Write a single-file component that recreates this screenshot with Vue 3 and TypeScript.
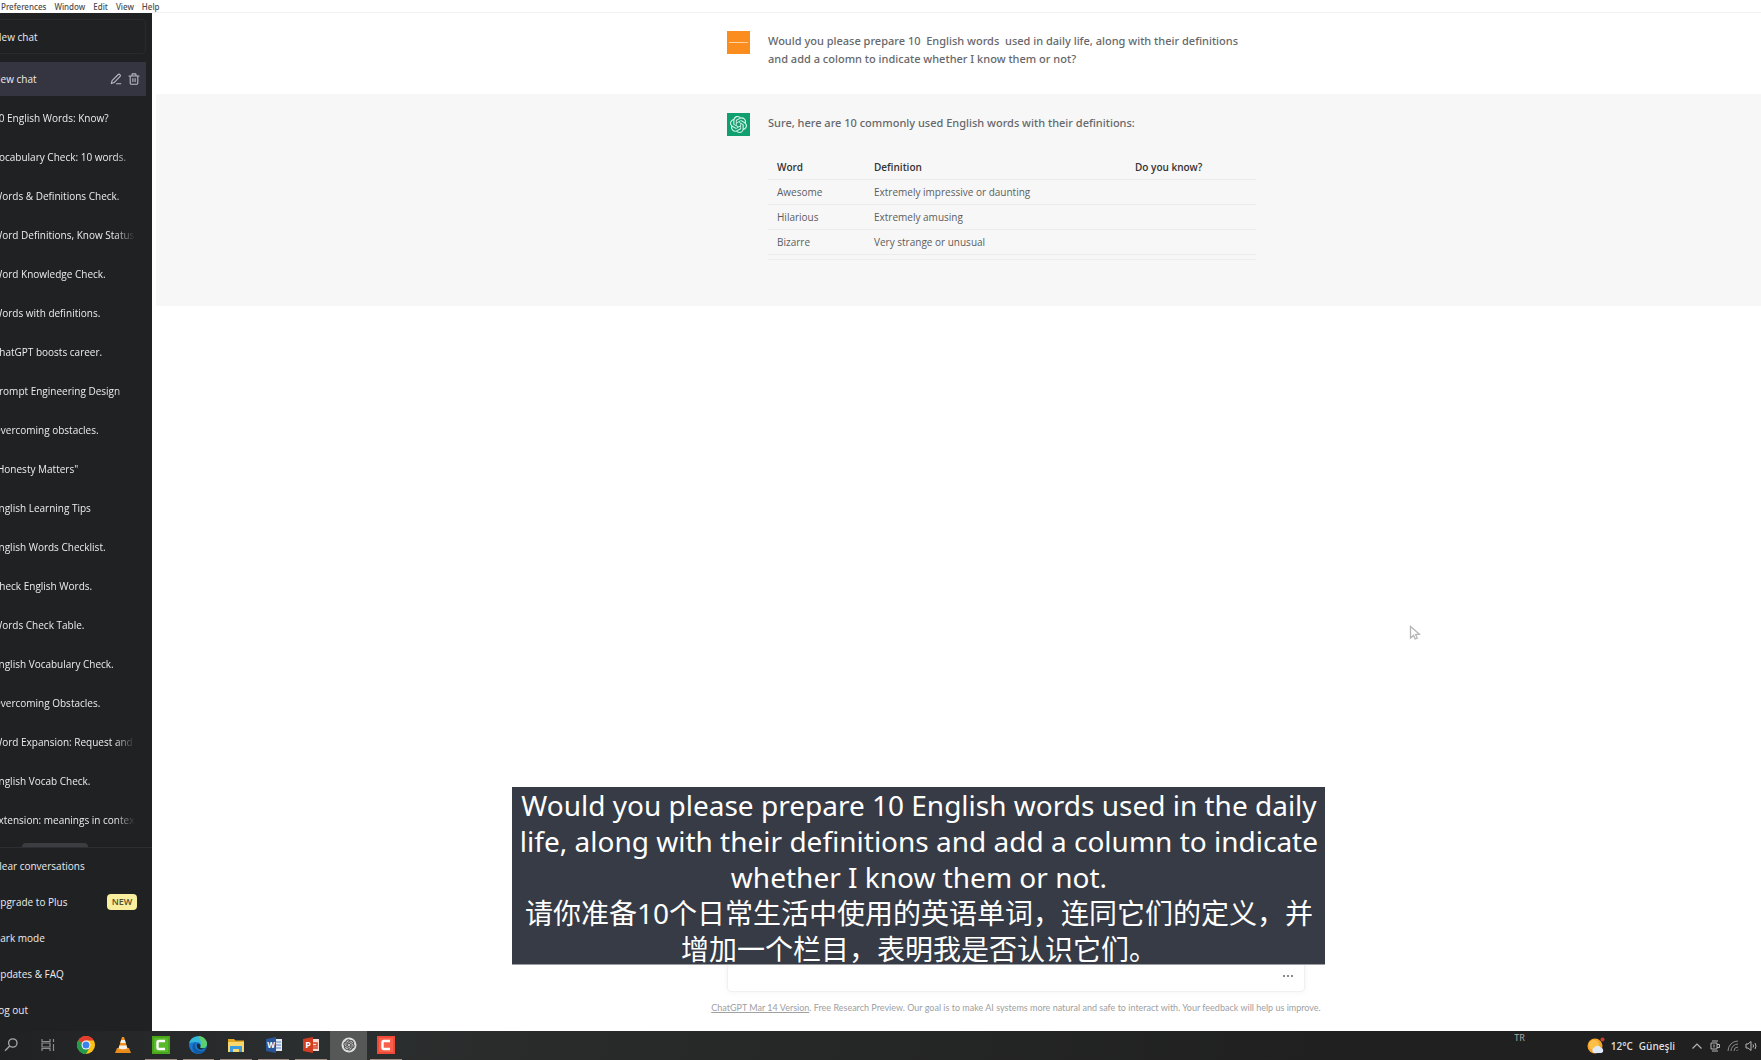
<script setup lang="ts">
const menus: string[] = ['Preferences', 'Window', 'Edit', 'View', 'Help']

const chats: string[] = [
  '10 English Words: Know?',
  'Vocabulary Check: 10 words.',
  'Words & Definitions Check.',
  'Word Definitions, Know Status',
  'Word Knowledge Check.',
  'Words with definitions.',
  'ChatGPT boosts career.',
  'Prompt Engineering Design',
  'Overcoming obstacles.',
  '"Honesty Matters"',
  'English Learning Tips',
  'English Words Checklist.',
  'Check English Words.',
  'Words Check Table.',
  'English Vocabulary Check.',
  'Overcoming Obstacles.',
  'Word Expansion: Request and',
  'English Vocab Check.',
  'Extension: meanings in context',
]

interface Action {
  label: string
  badge?: string
}
const actions: Action[] = [
  { label: 'Clear conversations' },
  { label: 'Upgrade to Plus', badge: 'NEW' },
  { label: 'Dark mode' },
  { label: 'Updates & FAQ' },
  { label: 'Log out' },
]

interface Entry {
  word: string
  definition: string
}
const entries: Entry[] = [
  { word: 'Awesome', definition: 'Extremely impressive or daunting' },
  { word: 'Hilarious', definition: 'Extremely amusing' },
  { word: 'Bizarre', definition: 'Very strange or unusual' },
]

const prompt =
  'Would you please prepare 10  English words  used in daily life, along with their definitions\nand add a colomn to indicate whether I know them or not?'

const captions: string[] = [
  'Would you please prepare 10 English words used in the daily',
  'life, along with their definitions and add a column to indicate',
  'whether I know them or not.',
  '请你准备10个日常生活中使用的英语单词，连同它们的定义，并',
  '增加一个栏目，表明我是否认识它们。',
]

const knot =
  'M22.2819 9.8211a5.9847 5.9847 0 0 0-.5157-4.9108 6.0462 6.0462 0 0 0-6.5098-2.9A6.0651 6.0651 0 0 0 4.9807 4.1818a5.9847 5.9847 0 0 0-3.9977 2.9 6.0462 6.0462 0 0 0 .7427 7.0966 5.98 5.98 0 0 0 .511 4.9107 6.051 6.051 0 0 0 6.5146 2.9001A5.9847 5.9847 0 0 0 13.2599 24a6.0557 6.0557 0 0 0 5.7718-4.2058 5.9894 5.9894 0 0 0 3.9977-2.9001 6.0557 6.0557 0 0 0-.7475-7.0729zm-9.022 12.6081a4.4755 4.4755 0 0 1-2.8764-1.0408l.1419-.0804 4.7783-2.7582a.7948.7948 0 0 0 .3927-.6813v-6.7369l2.02 1.1686a.071.071 0 0 1 .038.052v5.5826a4.504 4.504 0 0 1-4.4945 4.4944zm-9.6607-4.1254a4.4708 4.4708 0 0 1-.5346-3.0137l.142.0852 4.783 2.7582a.7712.7712 0 0 0 .7806 0l5.8428-3.3685v2.3324a.0804.0804 0 0 1-.0332.0615L9.74 19.9502a4.4992 4.4992 0 0 1-6.1408-1.6464zM2.3408 7.8956a4.485 4.485 0 0 1 2.3655-1.9728V11.6a.7664.7664 0 0 0 .3879.6765l5.8144 3.3543-2.0201 1.1685a.0757.0757 0 0 1-.071 0l-4.8303-2.7865A4.504 4.504 0 0 1 2.3408 7.872zm16.5963 3.8558L13.1038 8.364 15.1192 7.2a.0757.0757 0 0 1 .071 0l4.8303 2.7913a4.4944 4.4944 0 0 1-.6765 8.1042v-5.6772a.79.79 0 0 0-.407-.667zm2.0107-3.0231l-.142-.0852-4.7735-2.7818a.7759.7759 0 0 0-.7854 0L9.409 9.2297V6.8974a.0662.0662 0 0 1 .0284-.0615l4.8303-2.7866a4.4992 4.4992 0 0 1 6.6802 4.66zM8.3065 12.863l-2.02-1.1638a.0804.0804 0 0 1-.038-.0567V6.0742a4.4992 4.4992 0 0 1 7.3757-3.4537l-.142.0805L8.704 5.459a.7948.7948 0 0 0-.3927.6813zm1.0976-2.3654l2.602-1.4998 2.6069 1.4998v2.9994l-2.5974 1.4997-2.6067-1.4997Z'
</script>

<template>
  <div class="desktop">
    <nav class="menubar" aria-label="Menu bar">
      <button v-for="menu in menus" :key="menu" type="button">{{ menu }}</button>
    </nav>

    <div class="window">
      <aside class="sidebar">
        <button type="button" class="new-chat">New chat</button>

        <nav class="history" aria-label="Conversations">
          <div class="chat active">
            <a href="#" class="title">New chat</a>
            <button type="button" class="tool" aria-label="Rename">
              <svg viewBox="0 0 12 12" width="12" height="12" fill="none" stroke="#b9bac4" stroke-width="1.1" stroke-linecap="round" stroke-linejoin="round">
                <path d="M1.3 10.6l.8-3L8.2 1.5a1.1 1.1 0 0 1 1.6 0l.3.3a1.1 1.1 0 0 1 0 1.6L4.1 9.6zM6.6 10.8h4.2" />
              </svg>
            </button>
            <button type="button" class="tool" aria-label="Delete">
              <svg viewBox="0 0 12 12" width="12" height="12" fill="none" stroke="#b9bac4" stroke-width="1.1" stroke-linecap="round" stroke-linejoin="round">
                <path d="M1 3h10M4 3V1.8a.9.9 0 0 1 .9-.9h2.2a.9.9 0 0 1 .9.9V3M2.2 3v7.1a1.2 1.2 0 0 0 1.2 1.2h5.2a1.2 1.2 0 0 0 1.2-1.2V3M4.9 5.6v3M7.1 5.6v3" />
              </svg>
            </button>
          </div>
          <div v-for="chat in chats" :key="chat" class="chat">
            <a href="#" class="title fade">{{ chat }}</a>
          </div>
          <span class="thumb"></span>
        </nav>

        <nav class="actions" aria-label="Account">
          <button v-for="action in actions" :key="action.label" type="button">
            <span>{{ action.label }}</span>
            <span v-if="action.badge" class="badge">{{ action.badge }}</span>
          </button>
        </nav>
      </aside>

      <main class="main">
        <div class="thread">
          <section class="turn user">
            <div class="column">
              <span class="avatar orange"><i></i></span>
              <p class="prose">{{ prompt }}</p>
            </div>
          </section>

          <section class="turn assistant">
            <div class="column">
              <span class="avatar green">
                <svg viewBox="0 0 24 24" width="17" height="17" fill="#d9f3ea"><path :d="knot" /></svg>
              </span>
              <div class="answer">
                <p class="prose">Sure, here are 10 commonly used English words with their definitions:</p>
                <table>
                  <thead>
                    <tr>
                      <th class="c-word">Word</th>
                      <th class="c-def">Definition</th>
                      <th>Do you know?</th>
                    </tr>
                  </thead>
                  <tbody>
                    <tr v-for="entry in entries" :key="entry.word">
                      <td>{{ entry.word }}</td>
                      <td>{{ entry.definition }}</td>
                      <td></td>
                    </tr>
                  </tbody>
                </table>
              </div>
            </div>
          </section>

          <footer class="bottom">
            <button type="button" class="stop">
              <svg viewBox="0 0 9 9" width="9" height="9" fill="none" stroke="currentColor"><rect x="1" y="1" width="7" height="7" rx="1" /></svg>
              Stop generating
            </button>
            <form class="composer" @submit.prevent>
              <textarea rows="1" aria-label="Message"></textarea>
              <svg viewBox="0 0 12 4" width="12" height="4" fill="#8b8b8b">
                <rect x="1" y="1" width="2" height="2" /><rect x="5" y="1" width="2" height="2" /><rect x="9" y="1" width="2" height="2" />
              </svg>
            </form>
            <p class="notice">
              <a href="#">ChatGPT Mar 14 Version</a>. Free Research Preview. Our goal is to make AI systems more natural and safe to interact with. Your feedback will help us improve.
            </p>
          </footer>
        </div>
      </main>
    </div>

    <footer class="taskbar">
      <div class="apps">
        <button type="button" aria-label="Search">
          <svg viewBox="0 0 20 20" width="20" height="20" fill="none" stroke="#a9a9a9" stroke-width="1.3"><circle cx="11.8" cy="8" r="4.2" /><path d="M8.8 11L4 15.8" /></svg>
        </button>
        <button type="button" aria-label="Task view">
          <svg viewBox="0 0 20 20" width="20" height="20" fill="none" stroke="#8e8e8e" stroke-width="1.2"><path d="M4 4v2.5h8V4M4 16v-2.500h8V16M4 8h8v4H4zM15.500 4v3M15.500 9v7" /></svg>
        </button>
        <button type="button" aria-label="Chrome">
          <svg viewBox="0 0 20 20" width="20" height="20">
            <circle cx="10" cy="10" r="9" fill="#fbc116" />
            <path d="M10 10L2.200 5.500A9 9 0 0 1 17.800 5.500z" fill="#e33b2e" />
            <path d="M2.200 5.500A9 9 0 0 0 10 19l4-7z" fill="#249a4a" />
            <path d="M10 5.500h7.800L14 12z" fill="#fbc116" />
            <circle cx="10" cy="10" r="4.500" fill="#fff" /><circle cx="10" cy="10" r="3.500" fill="#3b82ee" />
          </svg>
        </button>
        <button type="button" aria-label="VLC">
          <svg viewBox="0 0 20 20" width="20" height="20">
            <path d="M4 13h12l2 5H2z" fill="#e88a1c" />
            <path d="M9 2h2l4 13q-5 2-10 0z" fill="#f0901e" />
            <path d="M8.100 5h3.800l.8 3H7.300zM6.400 10.500h7.200l.8 3q-4.400 1.600-8.800 0z" fill="#f4f0ea" />
          </svg>
        </button>
        <button type="button" class="open" aria-label="Camtasia">
          <svg viewBox="0 0 20 20" width="20" height="20"><rect x="1" y="1" width="18" height="18" fill="#48a51c" /><rect x="3" y="3" width="14" height="14" fill="#58b92b" /><path d="M14 6H8Q6.500 6 6.500 7.500v5Q6.500 14 8 14h6" fill="none" stroke="#fff" stroke-width="2.400" /></svg>
        </button>
        <button type="button" class="open" aria-label="Edge">
          <svg viewBox="0 0 20 20" width="20" height="20">
            <circle cx="10" cy="10" r="9" fill="#1879cf" />
            <path d="M1.200 8.500C2.500-1 18-1 19 9c0 4-4.500 5-7 3.500 1.500-2 .5-5.500-3.500-5.500-3 0-6 .5-7.300 1.500z" fill="#35b8d8" />
            <path d="M10 1.100c5 0 9 3.500 9 8 0 3.500-4 4.800-7 3.400 2-3 1.500-7-2-11.400z" fill="#5fcf6a" />
            <path d="M8 7.500c-3 4 .5 9 6 8.500 1.500-.2 2.500-.6 3.600-1.200C14 20.500 5.500 20 4.500 13c-.3-3 1.500-5 3.500-5.500z" fill="#125aa3" />
            <path d="M9.500 8.500c-2 2.500 0 6.500 4.500 6 2-.3 3.500-1 4-1.500-2 .8-4.500.5-6-.5 1-1.500.5-3.800-2.500-4z" fill="#1b2a38" />
          </svg>
        </button>
        <button type="button" class="open" aria-label="Explorer">
          <svg viewBox="0 0 20 20" width="20" height="20"><path d="M2 4h6l1.500 1.500H18V9H2z" fill="#e5a823" /><path d="M2 7h16v10H2z" fill="#f8d76c" /><path d="M4 11h12v6h-3v-3H7v3H4z" fill="#3d9be0" /></svg>
        </button>
        <button type="button" class="open" aria-label="Word">
          <svg viewBox="0 0 20 20" width="20" height="20"><rect x="10" y="4" width="8" height="12" fill="#e4ebf6" /><path d="M11 7h6M11 10h6M11 13h6" stroke="#5b80bd" /><path d="M2 4l10-2v16L2 16z" fill="#2a5699" /><text x="7" y="13" fill="#fff" font-size="8" font-weight="700" text-anchor="middle">W</text></svg>
        </button>
        <button type="button" class="open" aria-label="PowerPoint">
          <svg viewBox="0 0 20 20" width="20" height="20"><rect x="10" y="4" width="8" height="12" fill="#f6dcd6" /><path d="M12 8h4v3h-4M12 13h5" fill="none" stroke="#d24625" stroke-width="1.500" /><path d="M2 4l10-2v16L2 16z" fill="#d13d22" /><text x="7" y="13" fill="#fff" font-size="9" font-weight="700" text-anchor="middle">P</text></svg>
        </button>
        <button type="button" class="current" aria-label="ChatGPT">
          <svg viewBox="0 0 20 20" width="20" height="20"><circle cx="10" cy="10" r="7.500" fill="#dcdcdc" /><g transform="translate(4.500 4.500) scale(.46)"><path :d="knot" fill="#3f3f3f" stroke="#3f3f3f" stroke-width=".6" /></g></svg>
        </button>
        <button type="button" class="open" aria-label="Camtasia Recorder">
          <svg viewBox="0 0 20 20" width="20" height="20"><rect x="1" y="1" width="18" height="18" fill="#ef4a38" /><rect x="3" y="3" width="14" height="14" fill="#f8604c" /><path d="M14 6H8Q6.500 6 6.500 7.500v5Q6.500 14 8 14h6" fill="none" stroke="#fff" stroke-width="2.400" /></svg>
        </button>
      </div>

      <div class="tray">
        <span class="lang">TR</span>
        <button type="button" class="weather">
          <svg viewBox="0 0 18 18" width="18" height="18"><circle cx="8" cy="9" r="7.500" fill="#f5a52a" /><circle cx="7" cy="8" r="5" fill="#fbc04a" /><path d="M7 16a3 3 0 0 1 .3-5.500 3.800 3.800 0 0 1 6.700.3A2.700 2.700 0 0 1 14.500 16z" fill="#dfe9f7" /><circle cx="15.500" cy="2.500" r="2" fill="#c8402a" /></svg>
          <span>12°C</span><span>Güneşli</span>
        </button>
        <div class="status">
          <svg viewBox="0 0 12 12" width="12" height="12" fill="none" stroke="#b5b5b5" stroke-width="1.200"><path d="M1.500 8.500L6 4l4.500 4.500" /></svg>
          <svg viewBox="0 0 12 12" width="12" height="12" fill="none" stroke="#b5b5b5"><path d="M3 1h6M3 11h6M2 3h6v6H2zM8 4.500h2.500v3H8M5 4.500v3" /></svg>
          <svg viewBox="0 0 12 12" width="12" height="12" fill="none" stroke="#8b8b8b"><path d="M1 11A10 10 0 0 1 11 1M4 11a7 7 0 0 1 7-7M7 11a4 4 0 0 1 4-4M9.500 11L11 9.500" /></svg>
          <svg viewBox="0 0 12 12" width="12" height="12" fill="none" stroke="#b5b5b5"><path d="M1 4h2l3-2.500v9L3 8H1zM8 4.500q1 1.500 0 3M10 3q2 3 0 6" /></svg>
        </div>
      </div>
    </footer>

    <div class="captions">
      <span v-for="line in captions" :key="line">{{ line }}</span>
    </div>

    <svg class="pointer" viewBox="0 0 12 16" width="12" height="16" fill="#fff" stroke="#b4b4b4" stroke-width="1.300"><path d="M1.500 1.500v11.500l3-2.600 1.700 3.600 2-.9-1.600-3.500 3.900-.4z" /></svg>
  </div>
</template>

<style>
body {
  margin: 0;
}
</style>

<style scoped>
.desktop {
  position: relative;
  display: grid;
  grid-template-rows: 13px 1fr 29px;
  min-height: 100vh;
  overflow: hidden;
  background: #fff;
  font-family: 'Noto Sans', 'Noto Sans CJK SC', sans-serif;
  font-size: 11px;
}

button {
  padding: 0;
  border: 0;
  background: none;
  color: inherit;
  font: inherit;
}

a {
  color: inherit;
  text-decoration: none;
}

p {
  margin: 0;
}

.menubar {
  display: flex;
  gap: 8px;
  padding-left: 1px;
  color: #4c4c4c;
  font-size: 8px;
  font-weight: 500;
  line-height: 12px;
}

.window {
  display: flex;
  min-width: 0;
}

.sidebar {
  display: flex;
  flex: none;
  flex-direction: column;
  box-sizing: border-box;
  width: 152px;
  padding-top: 6px;
  overflow: hidden;
  background: #202123;
  color: #ececee;
  font-family: 'Open Sans', 'Noto Sans', sans-serif;
  font-size: 10px;
}

.new-chat {
  height: 35px;
  margin: 0 6px 8px -18px;
  padding-left: 11px;
  border: 1px solid #2a2b2e;
  border-radius: 4px;
  text-align: left;
}

.history {
  position: relative;
  display: flex;
  flex: 1;
  flex-direction: column;
  gap: 5px;
}

.chat {
  display: flex;
  align-items: center;
  gap: 6px;
  height: 34px;
  margin-left: -7px;
  padding-right: 18px;
}

.chat.active {
  margin-right: 6px;
  padding-right: 6px;
  background: #343541;
}

.title {
  flex: 1;
  overflow: hidden;
  white-space: nowrap;
}

.fade {
  mask-image: linear-gradient(to right, #000 122px, transparent 142px);
}

.tool {
  display: flex;
}

.thumb {
  position: absolute;
  bottom: 0;
  left: 22px;
  width: 66px;
  height: 4px;
  border-radius: 4px 4px 0 0;
  background: #3c3d40;
}

.actions {
  display: flex;
  flex-direction: column;
  padding-bottom: 3px;
  border-top: 1px solid #2e2f32;
}

.actions button {
  display: flex;
  align-items: center;
  justify-content: space-between;
  height: 36px;
  margin-left: -7px;
  padding-right: 15px;
}

.badge {
  width: 30px;
  border-radius: 4px;
  background: #f8ee9d;
  color: #55502f;
  font-size: 9px;
  font-weight: 600;
  line-height: 16px;
  text-align: center;
}

.main {
  flex: 1;
  min-width: 0;
  overflow: hidden;
  border-top: 1px solid #f2f2f2;
  margin-top: -1px;
}

/* The thread runs past the right edge of the screen. */
.thread {
  display: flex;
  flex-direction: column;
  height: 100%;
  margin-right: -119px;
}

.column {
  display: flex;
  gap: 18px;
  width: 578px;
  margin: 0 auto;
}

.turn {
  box-sizing: border-box;
  padding-top: 18px;
}

.user {
  height: 81px;
}

.assistant {
  min-height: 212px;
  margin: 0 4px;
  padding-top: 19px;
  background: #f7f7f7;
}

.avatar {
  display: flex;
  flex: none;
  align-items: center;
  justify-content: center;
  width: 23px;
  height: 23px;
}

.orange {
  background: #fb8c1e;
}

.orange i {
  width: 19px;
  height: 1px;
  background: #ffd3a3;
}

.green {
  background: #10a070;
}

.prose {
  padding-top: 1px;
  color: #66676b;
  font-weight: 500;
  line-height: 18px;
  white-space: pre-wrap;
}

.answer {
  width: 488px;
  height: 146px;
  border-bottom: 1px solid #efefef;
}

table {
  width: 100%;
  margin-top: 23px;
  border-collapse: collapse;
  table-layout: fixed;
  color: #5c5d60;
  font-family: 'Open Sans', 'Noto Sans', sans-serif;
  font-size: 10px;
}

th,
td {
  box-sizing: border-box;
  height: 25px;
  padding: 0 0 0 9px;
  border-bottom: 1px solid #ececec;
  text-align: left;
}

th {
  height: 24px;
  color: #333;
  font-weight: 600;
}

.c-word {
  width: 97px;
}

.c-def {
  width: 261px;
}

.bottom {
  display: flex;
  flex-direction: column;
  align-items: center;
  margin-top: auto;
  padding-bottom: 16px;
}

.stop {
  display: flex;
  align-items: center;
  gap: 6px;
  height: 24px;
  margin-bottom: 10px;
  color: #333;
}

.composer {
  display: flex;
  align-items: center;
  box-sizing: border-box;
  width: 578px;
  height: 32px;
  padding: 0 10px;
  border: 1px solid #f0f0f0;
  border-radius: 4px;
  box-shadow: 0 0 6px #0000000d;
}

.composer textarea {
  flex: 1;
  border: 0;
  outline: 0;
  background: none;
  font: inherit;
  resize: none;
}

.notice {
  margin-top: 9px;
  color: #a0a0a0;
  font-family: Lato, 'Noto Sans', sans-serif;
  font-size: 9px;
  line-height: 14px;
  white-space: nowrap;
}

.notice a {
  text-decoration: underline;
}

.taskbar {
  display: flex;
  justify-content: space-between;
  background: linear-gradient(to right, #202123, #2c2f2f 18%, #272828 40%, #202020 75%);
  color: #dedede;
}

.apps {
  display: grid;
  grid-template-columns: repeat(11, 1fr);
  width: 413px;
  margin-left: -8px;
}

.apps button {
  display: flex;
  align-items: center;
  justify-content: center;
  margin: 0 3px;
  border-bottom: 1px solid transparent;
}

.apps .open {
  border-bottom-color: #a08f86;
}

.apps .current {
  margin: 0;
  background: #565858;
}

.tray {
  display: flex;
  align-items: center;
  padding-right: 4px;
}

.lang {
  align-self: flex-start;
  margin-right: 62px;
  color: #a8a8a8;
  font-size: 9px;
  line-height: 14px;
}

.weather {
  display: flex;
  align-items: center;
  gap: 6px;
  font-family: 'Open Sans', 'Noto Sans', sans-serif;
  font-size: 10px;
  font-weight: 600;
}

.status {
  display: flex;
  gap: 6px;
  margin-left: 16px;
}

.captions {
  position: absolute;
  bottom: 95px;
  left: 29.1%;
  display: flex;
  flex-direction: column;
  align-items: center;
  box-sizing: border-box;
  width: 813px;
  height: 178px;
  overflow: hidden;
  border-bottom: 1px solid #9b9da3;
  background: #303541f8;
  background-clip: padding-box;
  color: #fff;
  font-size: 28px;
  line-height: 36px;
  white-space: nowrap;
}

.captions span {
  flex: none;
}

.pointer {
  position: absolute;
  top: 59%;
  left: 80%;
}
</style>
